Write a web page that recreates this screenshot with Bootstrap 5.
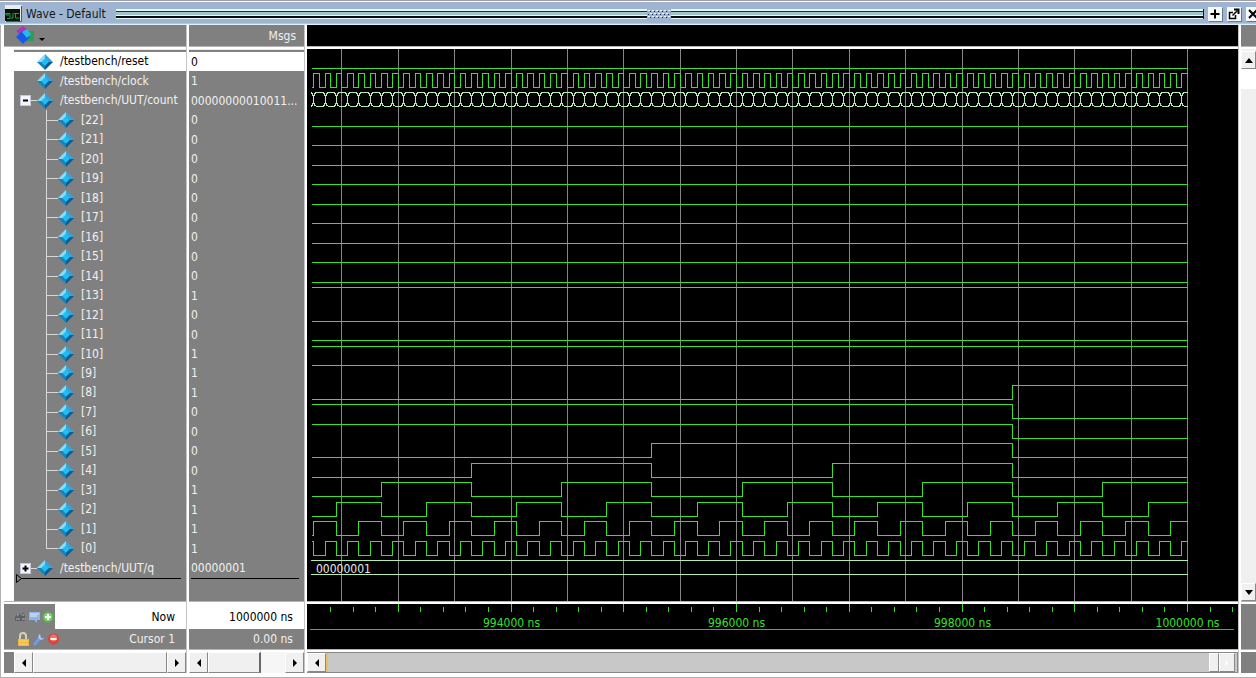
<!DOCTYPE html>
<html lang="en">
<head>
<meta charset="utf-8">
<meta name="viewport" content="width=device-width, initial-scale=1">
<title>Wave - Default</title>
<link href="https://cdn.jsdelivr.net/npm/bootstrap@5.3.0/dist/css/bootstrap.min.css" rel="stylesheet">
<style>
  :root { --pane: #808080; --face: #f0f0f0; --wave: #3ce02c; }
  body { font: 12px/16px "DejaVu Sans Condensed", "Noto Sans", sans-serif; color: #f0f0f0; background: #fff; }
  button { padding: 0; border: 0; background: none; line-height: 0; color: #000; }
  svg { display: block; }

  .title-bar { height: 25px; padding: 2px 0 0 5px; color: #101820; background: #9fb4d0; border-top: 1px solid #a09ca4; border-bottom: 1px solid #dcf2fa; box-shadow: inset 0 1px #fff, inset 0 -1px #b8c8dc; }
  .title-bar h1 { font-size: 12px; line-height: 16px; margin: 0 10px 0 4px; }
  .grip-bar { height: 10px; border: solid #101c20; border-width: 0 1px; background: linear-gradient(#e4fafa 0 2px, #203030 2px 3px, #a4c4cc 3px 6px, #e4fafa 6px 7px, #080c10 7px 9px, #e4fafa 9px 10px); }
  .bar-left { border-width: 0; }
  .bar-right { border-left-width: 0; }
  .win-tools { gap: 5px; margin: 0 -4px 0 4px; }
  .win-tools button { width: 14px; height: 14px; background: #f6f8fa; box-shadow: 1px 1px #68788c; }

  .frame { border: solid #b0b0b0; border-width: 0 0 1px 1px; padding: 0 0 4px 3px; }
  .names-pane { width: 182px; }
  .msgs-pane { width: 115px; }
  .side-pane { width: 15px; overflow: hidden; }
  .v-split { width: 3px; background: linear-gradient(90deg, #c4c4c4 0 1px, #fff 1px 3px); }
  .h-split { height: 3px; flex: none; background: linear-gradient(#b4b4b4 0 1px, #fff 1px 3px); }
  .pane-head { height: 21px; flex: none; background: var(--pane); }
  .pane-main { flex: 1 1 0; min-height: 0; background: var(--pane); }
  .names-pane .pane-main { border-left: 10px solid #fff; }
  .list-top { height: 3px; flex: none; background: linear-gradient(#e8e8e8 0 1px, var(--pane) 1px 3px); }
  .signal-list { flex: 1 1 0; min-height: 0; }
  .signal-list li { flex: 1 1 0; min-height: 0; white-space: pre; }
  .signal-list li.picked { background: #fff; color: #000; }
  .list-end { height: 23px; flex: none; }
  .end-mark { height: 1px; background: #000; }
  .names-pane .end-mark { margin: 0 5px 0 3px; }
  .msgs-pane .end-mark { margin: 0 5px 0 2px; }
  .names-pane .list-end svg { margin: -5px 0 0 2px; }
  .values li { padding-left: 2px; }

  .twig { width: 23px; flex: none; }
  .stub { width: 6px; height: 1px; background: #d8d8d8; }
  .box-btn { width: 11px; height: 11px; margin-left: 6px; background: #f4f4fa; border: 1px solid #c0c8dc; }
  .branch { width: 12px; margin-left: 32px; background: linear-gradient(#d8d8d8, #d8d8d8) 0 0 / 1px 100% no-repeat, linear-gradient(#d8d8d8, #d8d8d8) 0 50% / 100% 1px no-repeat; }
  .branch.last { background-size: 1px 50%, 100% 1px; }
  .gem { width: 16px; height: 16px; flex: none; }
  .name-text { margin-left: 7px; padding-bottom: 1px; }

  .foot-block { height: 45px; flex: none; background: var(--pane); }
  .foot-now { height: 25px; }
  .foot-cursor { height: 20px; }
  .foot-white { background: #fff; color: #000; }
  .tools { width: 51px; gap: 1px; padding-left: 10px; background: var(--pane); }
  .tools-low { padding-left: 13px; gap: 2px; width: 56px; }
  .foot-text { padding-right: 11px; text-align: right; }

  .scroll-row { height: 21px; flex: none; background: #f6f6f6; }
  .names-pane .scroll-row { border-left: 10px solid var(--pane); }
  .knob { background: var(--face); border: 1px solid; border-color: #fff #888 #888 #fff; display: grid; place-items: center; }
  .knob-arrow { width: 19px; flex: none; }
  .msgs-thumb { width: 53px; border-right: 2px solid #686868; }
  .wave-scroll { background: #c8c8c8; border: solid #888; border-width: 1px 1px 1px 0; padding-right: 2px; }
  .wave-scroll .start-mark { width: 2px; background: #e8c060; }
  .side-pane .pane-main { padding-top: 2px; background: var(--face); }
  .side-pane .knob { height: 18px; flex: none; }
  .side-pane .rest { height: 20px; background: #fff; }

  .wave-pane .pane-head, .wave-pane .pane-main, .wave-pane .foot-block { background: #000; }
  .wave-pane svg.plot { width: 100%; height: 100%; }
  .plot path { fill: none; stroke-width: 1; shape-rendering: crispEdges; }
  .plot .rule { stroke: #858585; }
  .plot .logic { stroke: var(--wave); }
  .plot .bus { stroke: #b4ecb4; }
  .plot .bus-text { fill: #e8e8e8; }
  .plot .time-text { fill: #38e02c; text-anchor: middle; }
</style>
</head>
<body class="vh-100 d-flex flex-column overflow-hidden">

<svg width="0" height="0" class="position-absolute" aria-hidden="true">
  <symbol id="gem" viewBox="0 0 17 17">
    <path d="M8.500 0 0 8.500 5 8.500 8.500 5Z" fill="#8adcf4"/>
    <path d="M8.500 0 17 8.500H12L8.500 5Z" fill="#2fa6dc"/>
    <path d="M0 8.500 8.500 17V12L5 8.500Z" fill="#1684b8"/>
    <path d="M17 8.500 8.500 17V12L12 8.500Z" fill="#0a5c94"/>
    <path d="M8.500 4.500 12.500 8.500 8.500 12.500 4.500 8.500Z" fill="#1cc0f6"/>
  </symbol>
  <symbol id="left" viewBox="0 0 8 8"><path d="M6 0v8L2 4Z"/></symbol>
  <symbol id="right" viewBox="0 0 8 8"><path d="M2 0v8l4-4Z"/></symbol>
</svg>

<header class="title-bar d-flex align-items-center flex-shrink-0">
  <svg width="17" height="17" viewBox="0 0 17 17"><path d="M0 0h17v17H0Z" fill="#e8ecec"/><path d="M0 4h15v12H0Z" fill="#061408"/><path d="M1 8.500h4v5H2M1 8v2h3M6 13h2V8M9 8.500h5M10.500 8v5h4" fill="none" stroke="#1f9c48"/><path d="M16.500 1v15.500H1" fill="none" stroke="#555"/></svg>
  <h1 class="text-nowrap fw-normal">Wave - Default</h1>
  <div class="d-flex flex-grow-1">
    <div class="grip-bar bar-left flex-fill"></div>
    <svg width="24" height="10" viewBox="0 0 24 10"><path d="M1 1.500h23M3 4.500h20M1 7.500h23" stroke="#dff4fc" stroke-dasharray="2 2"/><path d="M3 2.500h20M1 5.500h22M3 8.500h20" stroke="#182838" stroke-dasharray="1 3"/></svg>
    <div class="grip-bar bar-right flex-fill"></div>
  </div>
  <div class="win-tools d-flex">
    <button type="button" aria-label="Zoom pane"><svg width="14" height="14"><path d="M7 2.500v9M2.500 7h9" stroke="#000" stroke-width="2"/></svg></button>
    <button type="button" aria-label="Undock"><svg width="14" height="14" fill="none" stroke="#000"><path d="M6 5.500H2.500v6h6V8" stroke-width="1.500"/><path d="m5.500 8.500 5-5" stroke-width="1.500"/><path d="M7 2.500h4.500V7" stroke-width="2"/></svg></button>
    <button type="button" aria-label="Close"><svg width="14" height="14"><path d="m3 3 8 8M11 3l-8 8" stroke="#000" stroke-width="2"/></svg></button>
  </div>
</header>

<main class="frame d-flex flex-grow-1 overflow-hidden">
  <section class="names-pane d-flex flex-column flex-shrink-0">
    <div class="pane-head d-flex align-items-center">
      <button type="button" class="ms-2 ps-1" aria-label="Columns">
        <svg width="32" height="19" viewBox="0 0 32 19"><path d="m0 5 7-5 5 4-6 6Z" fill="#b030c0"/><path d="M9 5h9v10H9Z" fill="#28a050"/><path d="m0 11 6-6 8 6-7 7Z" fill="#1858e8"/><path d="m6 6 5-3 4 5-4 4Z" fill="#28b8f0"/><path d="M23 12h6l-3 3Z"/></svg>
      </button>
    </div>
    <div class="h-split"></div>
    <div class="pane-main d-flex flex-column">
      <div class="list-top"></div>
      <ul class="signal-list list-unstyled m-0 d-flex flex-column" id="names"></ul>
      <div class="list-end"><div class="end-mark"></div><svg width="6" height="9"><path d="M.5.5v8l5-4Z" fill="#808080" stroke="#000"/></svg></div>
    </div>
    <div class="h-split"></div>
    <div class="foot-block">
      <div class="foot-now foot-white d-flex align-items-stretch">
        <div class="tools d-flex align-items-center">
          <button type="button" aria-label="Find"><svg width="13" height="14"><path d="M1 11V7l2-3 1 3 2-4 1 3 2-4 2 4v5Z" fill="#5c6064"/><path d="M2 9h4M8 9h3M3 5h1M8 5h2" stroke="#b0b4b8"/></svg></button>
          <button type="button" aria-label="Comment"><svg width="13" height="14"><path d="M1 2h11v8H9v3l-3-3H1Z" fill="#8eb4e8"/><path d="M2 4h9M2 6h7" stroke="#e4eefc"/></svg></button>
          <button type="button" aria-label="Add cursor"><svg width="12" height="14"><circle cx="6" cy="7" r="5.500" fill="#58b848"/><circle cx="6" cy="7" r="4" fill="#86d078"/><path d="M6 4v6M3 7h6" stroke="#fff" stroke-width="2"/></svg></button>
        </div>
        <div class="foot-text flex-grow-1 align-self-center">Now</div>
      </div>
      <div class="foot-cursor d-flex align-items-center">
        <div class="tools tools-low d-flex align-items-center">
          <button type="button" aria-label="Lock cursor"><svg width="13" height="15"><path d="M3 7V4a3 3 0 0 1 6 0v3" fill="none" stroke="#d8d0b0" stroke-width="2"/><path d="M1 7h11v7H1Z" fill="#f0b83c"/><path d="M2 9h9M2 12h9" stroke="#fbd880"/></svg></button>
          <button type="button" aria-label="Edit cursor"><svg width="13" height="15"><path d="m2 13 6-7" stroke="#6c9ce8" stroke-width="3"/><path d="M8 2a3 3 0 1 0 4 4L9 6Z" fill="#a8c8f8"/></svg></button>
          <button type="button" aria-label="Delete cursor"><svg width="13" height="15"><circle cx="6.500" cy="7" r="5.500" fill="#e04038"/><circle cx="6.500" cy="6" r="3.500" fill="#f07468"/><path d="M3.500 7h6" stroke="#fff" stroke-width="2"/></svg></button>
        </div>
        <div class="foot-text flex-grow-1">Cursor 1</div>
      </div>
    </div>
    <div class="h-split"></div>
    <div class="scroll-row d-flex">
      <button type="button" class="knob knob-arrow" aria-label="Scroll left"><svg width="8" height="8"><use href="#left"/></svg></button>
      <div class="knob flex-grow-1"></div>
      <button type="button" class="knob knob-arrow" aria-label="Scroll right"><svg width="8" height="8"><use href="#right"/></svg></button>
    </div>
  </section>
  <div class="v-split flex-shrink-0"></div>

  <section class="msgs-pane d-flex flex-column flex-shrink-0">
    <div class="pane-head d-flex align-items-center justify-content-end pe-2">Msgs</div>
    <div class="h-split"></div>
    <div class="pane-main d-flex flex-column">
      <div class="list-top"></div>
      <ul class="signal-list values list-unstyled m-0 d-flex flex-column" id="values"></ul>
      <div class="list-end"><div class="end-mark"></div></div>
    </div>
    <div class="h-split"></div>
    <div class="foot-block">
      <div class="foot-now foot-white foot-text d-flex align-items-center justify-content-end">1000000 ns</div>
      <div class="foot-cursor foot-text d-flex align-items-center justify-content-end">0.00 ns</div>
    </div>
    <div class="h-split"></div>
    <div class="scroll-row d-flex">
      <button type="button" class="knob knob-arrow" aria-label="Scroll left"><svg width="8" height="8"><use href="#left"/></svg></button>
      <div class="knob msgs-thumb"></div>
      <button type="button" class="knob knob-arrow ms-auto" aria-label="Scroll right"><svg width="8" height="8"><use href="#right"/></svg></button>
    </div>
  </section>
  <div class="v-split flex-shrink-0"></div>

  <section class="wave-pane d-flex flex-column flex-grow-1 overflow-hidden">
    <div class="pane-head"></div>
    <div class="h-split"></div>
    <div class="pane-main overflow-hidden"><svg class="plot" id="plot"></svg></div>
    <div class="h-split"></div>
    <div class="foot-block"><svg class="plot" id="ruler"></svg></div>
    <div class="h-split"></div>
    <div class="scroll-row wave-scroll d-flex">
      <button type="button" class="knob knob-arrow" aria-label="Scroll left"><svg width="8" height="8"><use href="#left"/></svg></button>
      <div class="start-mark"></div>
      <div class="knob ms-auto px-1"></div>
      <button type="button" class="knob px-1" aria-label="Scroll right"><svg width="6" height="8" fill="#fff"><use href="#right"/></svg></button>
    </div>
  </section>
  <div class="v-split flex-shrink-0"></div>

  <section class="side-pane d-flex flex-column flex-shrink-0">
    <div class="pane-head"></div>
    <div class="h-split"></div>
    <div class="pane-main d-flex flex-column">
      <button type="button" class="knob" aria-label="Scroll up"><svg width="8" height="5"><path d="M0 5h8L4 0Z"/></svg></button>
      <div class="rest"></div>
      <div class="flex-grow-1"></div>
      <button type="button" class="knob" aria-label="Scroll down"><svg width="8" height="5"><path d="M0 0h8L4 5Z"/></svg></button>
    </div>
    <div class="h-split"></div>
    <div class="foot-block"></div>
    <div class="h-split"></div>
    <div class="pane-head"></div>
  </section>
</main>

<script src="https://cdn.jsdelivr.net/npm/bootstrap@5.3.0/dist/js/bootstrap.bundle.min.js"></script>
<script>
(() => {
  // The counter steps on each rising clock edge: every 100 ns, at 50 ns past the hundred.
  const END = 1000000, FINAL = 9999, PERIOD = 100, SPAN = 8258, BITS = 23;
  const gem = '<svg class="gem"><use href="#gem"/></svg>';
  const stem = sign => '<span class="twig d-flex align-items-center">' + (sign ?
    `<button type="button" class="box-btn" aria-label="Toggle"><svg width="9" height="9"><path d="${sign}" stroke="#000" stroke-width="2"/></svg></button><span class="stub"></span>` : '') + '</span>';
  const signal = (name, value, sign, cls = '') => ({ html: stem(sign) + gem + `<span class="name-text">${name}</span>`, value, cls });

  const rows = [signal('/testbench/reset', '0', '', 'picked'), signal('/testbench/clock', '1', ''),
                signal('/testbench/UUT/count', '00000000010011...', 'M2 4.500h5')];
  for (let b = BITS - 1; b >= 0; b--)
    rows.push({ html: `<span class="branch align-self-stretch${b ? '' : ' last'}"></span>${gem}<span class="name-text">[${b}]</span>`, value: FINAL >> b & 1, cls: '' });
  rows.push(signal('/testbench/UUT/q', '00000001', 'M1.500 4.500h6M4.500 1.500v6'));

  const li = (html, cls) => `<li class="d-flex align-items-center ${cls}">${html}</li>`;
  document.getElementById('names').innerHTML = rows.map(r => li(r.html, r.cls)).join('');
  document.getElementById('values').innerHTML = rows.map(r => li(r.value, r.cls)).join('');

  const snap = v => Math.round(v - .5) + .5;

  function draw() {
    const plot = document.getElementById('plot'), ruler = document.getElementById('ruler');
    const w = plot.clientWidth, h = plot.clientHeight;
    const scale = w / SPAN, x0 = 5, x1 = w - 50.5, pitch = (h - 26) / rows.length;
    const X = t => snap(x1 + (t - END) * scale);
    const tStart = END - (x1 - x0) / scale;
    const hi = i => snap(3 + i * pitch + 2), lo = i => hi(i) + 14;
    let grid = '', logic = '', bus = '';

    for (let t = END; X(t) > x0; t -= 500) grid += `M${X(t)} 0V${h}`;

    // Draws one logic trace from a level function sampled every half period.
    const trace = (i, level) => {
      let t = Math.ceil(tStart / 50) * 50, now = level(t - 50);
      let d = `M${x0} ${now ? hi(i) : lo(i)}`;
      for (; t < END; t += 50) {
        const next = level(t);
        if (next !== now) { d += `H${X(t)}V${next ? hi(i) : lo(i)}`; now = next; }
      }
      return d + `H${x1}`;
    };
    const count = t => FINAL - Math.floor((END - 50 - t + PERIOD - 1) / PERIOD);

    logic += trace(0, () => 0);
    logic += trace(1, t => t % 100 >= 50 ? 1 : 0);
    for (let b = 0; b < BITS; b++) logic += trace(BITS + 2 - b, t => count(t) >> b & 1);

    const T = hi(2), B = lo(2);
    let from = x0 - 1;
    for (let t = Math.ceil((tStart - 50) / 100) * 100 + 50; t < END; t += 100) {
      const x = X(t);
      bus += `M${from} ${T}H${x - 2}L${x} ${T + 4}V${B - 4}L${x + 2} ${B}M${from} ${B}H${x - 2}L${x} ${B - 4}V${T + 4}L${x + 2} ${T}`;
      from = x + 2;
    }
    bus += `M${from} ${T}H${x1}M${from} ${B}H${x1}`;
    const q = rows.length - 1;
    bus += `M${x0 - 1} ${hi(q)}H${x1}M${x0 - 1} ${lo(q)}H${x1}`;

    plot.innerHTML = `<path class="rule" d="${grid}"/><path class="logic" d="${logic}"/><path class="bus" d="${bus}"/>
      <text class="bus-text" x="9" y="${hi(q) + 12}">00000001</text>`;

    let ticks = '', labels = '';
    for (let t = END + 400; X(t) > 20; t -= 200) ticks += `M${X(t)} 3V8`;
    for (let t = END; X(t) > 50; t -= 1000) ticks += `M${X(t)} 0V8`;
    for (let t = END; X(t) > 150; t -= 2000) labels += `<text class="time-text" x="${X(t)}" y="23">${t} ns</text>`;
    ruler.innerHTML = `<path class="logic" d="${ticks}"/><path class="rule" d="M3 25.500H${w - 4}"/>${labels}`;
  }
  draw();
  addEventListener('resize', draw);
})();
</script>
</body>
</html>
